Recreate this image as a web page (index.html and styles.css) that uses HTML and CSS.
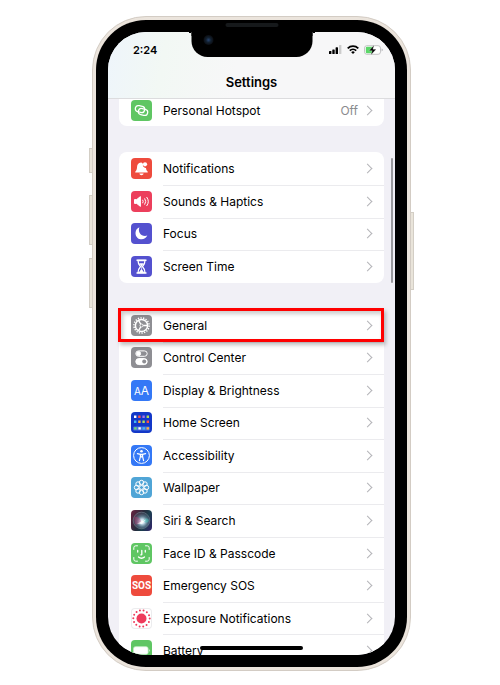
FILE: index.html
```html
<!DOCTYPE html>
<html lang="en">
<head>
    <meta charset="UTF-8">
    <meta name="viewport" content="width=device-width, initial-scale=1.0">
    <title>Settings</title>
    <link rel="stylesheet" href="styles.css">
</head>
<body>
    <div class="phone">
        <span class="side-button mute"></span>
        <span class="side-button volume-up"></span>
        <span class="side-button volume-down"></span>
        <span class="side-button power"></span>
        <div class="bezel">
            <div class="notch">
                <span class="speaker"></span>
                <span class="camera"></span>
            </div>
            <div class="screen">
                <header>
                    <div class="status-bar">
                        <span class="time">2:24</span>
                        <svg class="signal" viewBox="0 0 13 9" width="13" height="9">
                            <rect x="0" y="6" width="2.4" height="3" rx=".6"/>
                            <rect x="3.3" y="4.5" width="2.4" height="4.5" rx=".6"/>
                            <rect x="6.6" y="2.3" width="2.4" height="6.7" rx=".6"/>
                            <rect x="10" y="0" width="2.4" height="9" rx=".6" fill="#ccc"/>
                        </svg>
                        <svg class="wifi" viewBox="0 0 12 9" width="12" height="9" fill="none" stroke="#000" stroke-width="1.8">
                            <path d="M.7 3.3a7.6 7.6 0 0 1 10.6 0M2.8 5.6a4.6 4.6 0 0 1 6.4 0"/>
                            <path d="M6 9 4.2 7.2a2.6 2.6 0 0 1 3.6 0z" fill="#000" stroke="none"/>
                        </svg>
                        <svg class="battery" viewBox="0 0 19 10" width="19" height="10">
                            <rect x=".5" y=".7" width="16" height="8.6" rx="2.4" fill="#fff" stroke="#b5b5b8" stroke-width=".8"/>
                            <path d="M3 1.800h5.500v6.400H3A1.200 1.200 0 0 1 1.800 7V3A1.200 1.200 0 0 1 3 1.800z" fill="#5bd769"/>
                            <path d="M17.600 3.600q1.200.4 1.200 1.400t-1.200 1.400z" fill="#b5b5b8"/>
                            <path d="M10.200 0 5 5.700h3.200L6.800 10 12.200 4.200H8.900z" fill="#000" stroke="#fff" stroke-width=".3"/>
                        </svg>
                    </div>
                    <h1>Settings</h1>
                </header>

                <main>
                    <ul class="group partial">
                        <li><a href="#hotspot">
                            <svg class="icon green" viewBox="0 0 21 21" fill="none" stroke="#fff" stroke-width="1.3">
                                <rect x="4.3" y="6" width="9.4" height="6.2" rx="3.1" transform="rotate(14 9 9)"/>
                                <rect x="7.3" y="8.800" width="9.4" height="6.2" rx="3.1" transform="rotate(14 12 12)"/>
                            </svg>
                            <span class="label">Personal Hotspot</span><span class="value">Off</span></a></li>
                    </ul>

                    <ul class="group alerts">
                        <li><a href="#notifications">
                            <svg class="icon red" viewBox="0 0 21 21" fill="#fff">
                                <path d="M10 4.500c-2.700.3-3.900 2.200-4 4.700-.1 2.500-.6 3.100-1.600 4.200-.5.600-.2 1.200.5 1.200h11.200c.7 0 1-.6.5-1.200-1-1-1.500-1.900-1.600-3.400-2 .2-3.600-1.600-3-3.400.1-.6-.7-2.200-2-2.100zM8.400 15.500h4.200c-.3 2.200-3.900 2.200-4.200 0z"/>
                                <circle cx="14" cy="6.300" r="2.100"/>
                            </svg>
                            <span class="label">Notifications</span></a></li>
                        <li><a href="#sounds">
                            <svg class="icon pink" viewBox="0 0 21 21" fill="none" stroke="#fff" stroke-width="1">
                                <path d="M3.500 8.600h2.200l3.700-3v9.800l-3.700-3H3.500z" fill="#fff"/>
                                <path d="M11.600 8.800q1.100 1.700 0 3.400M13.600 7.400q2.200 3.100 0 6.200M15.600 6q3.400 4.500 0 9"/>
                            </svg>
                            <span class="label">Sounds &amp; Haptics</span></a></li>
                        <li><a href="#focus">
                            <svg class="icon purple" viewBox="0 0 21 21" fill="#fff">
                                <path d="M8.400 4.200C3.600 6 3.600 12.500 6.600 14.900c3.300 2.700 8.200 1.300 9.700-2.300C10.600 14.300 6.400 9.400 8.400 4.200z"/>
                            </svg>
                            <span class="label">Focus</span></a></li>
                        <li><a href="#screen-time">
                            <svg class="icon purple" viewBox="0 0 21 21" fill="none" stroke="#fff" stroke-width="1.5">
                                <path d="M5.500 4.300h10M5.500 16.900h10"/>
                                <path d="M7 4.500c0 3.500 1 4.500 2.500 6.100C8 12.200 7 13.200 7 16.700h7c0-3.500-1-4.500-2.500-6.100C13 9 14 8 14 4.500z" stroke-width="1.300"/>
                                <path d="M8.300 7.300h4.400l-1.900 2.900v3l2.200 3H8l2.200-3v-3z" fill="#fff" stroke="none"/>
                            </svg>
                            <span class="label">Screen Time</span></a></li>
                    </ul>

                    <ul class="group device">
                        <li class="highlight"><a href="#general">
                            <svg class="icon gray" viewBox="0 0 21 21" fill="none" stroke="#fff">
                                <circle cx="10.500" cy="10.500" r="7.600" stroke-width="1.500" stroke-dasharray="1.300 1.353"/>
                                <circle cx="10.500" cy="10.500" r="6.100" stroke-width="1.500"/>
                                <circle cx="10.500" cy="10.500" r="1.500" stroke-width=".9"/>
                                <path d="M12.200 10.500h4M9.700 9.100l-2-3.500M9.700 11.900l-2 3.500" stroke-width="1.300"/>
                            </svg>
                            <span class="label">General</span></a></li>
                        <li><a href="#control-center">
                            <svg class="icon gray" viewBox="0 0 21 21" fill="none" stroke="#fff">
                                <rect x="4.800" y="3.900" width="11.400" height="5.400" rx="2.700"/>
                                <circle cx="7.600" cy="6.600" r="2" fill="#fff"/>
                                <rect x="4.800" y="11.600" width="11.400" height="6" rx="3" fill="#fff"/>
                                <circle cx="13.200" cy="14.600" r="2" fill="#8e8e93" stroke="none"/>
                            </svg>
                            <span class="label">Control Center</span></a></li>
                        <li><a href="#display">
                            <span class="icon blue letters"><small>A</small>A</span>
                            <span class="label">Display &amp; Brightness</span></a></li>
                        <li><a href="#home-screen">
                            <svg class="icon navy" viewBox="0 0 21 21">
                                <rect x="2.200" y="14.400" width="16.600" height="4" rx="1" fill="#4a73dd"/>
                                <path fill="#fff" d="M3 3.600h2.400V6H3zM7.400 15.200h2.400v2.400H7.400z"/>
                                <path fill="#ff5148" d="M7.200 3.600h2.400V6H7.200zM15.600 8.600H18V11h-2.400z"/>
                                <path fill="#a873e8" d="M11.400 3.600h2.400V6h-2.400z"/>
                                <path fill="#b5dc55" d="M15.600 3.600H18V6h-2.400zM11.400 8.600h2.400V11h-2.400z"/>
                                <path fill="#44b9f2" d="M3 8.600h2.400V11H3zM11.600 15.200H14v2.400h-2.400z"/>
                                <path fill="#ffb13d" d="M7.200 8.600h2.400V11H7.200zM15.600 15.200H18v2.400h-2.400z"/>
                                <path fill="#70dc70" d="M3.200 15.200h2.400v2.400H3.200z"/>
                            </svg>
                            <span class="label">Home Screen</span></a></li>
                        <li><a href="#accessibility">
                            <svg class="icon blue" viewBox="0 0 21 21" fill="none" stroke="#fff">
                                <circle cx="10.500" cy="10.500" r="7.900" stroke-width="1"/>
                                <circle cx="10.500" cy="6.300" r="1.300" fill="#fff" stroke="none"/>
                                <path d="M6.400 8.600l3 .7v2.400L8.400 15.700M14.600 8.600l-3 .7v2.400l1 4M9.600 9.400h1.800v2.400H9.600z" stroke-width="1.200" stroke-linecap="round" stroke-linejoin="round"/>
                            </svg>
                            <span class="label">Accessibility</span></a></li>
                        <li><a href="#wallpaper">
                            <svg class="icon sky" viewBox="0 0 21 21" fill="none" stroke="#fff" stroke-width="1">
                                <circle cx="10.500" cy="10.500" r="2"/>
                                <circle cx="10.500" cy="5.500" r="2.200"/><circle cx="14" cy="7" r="2.200"/>
                                <circle cx="15.500" cy="10.500" r="2.200"/><circle cx="14" cy="14" r="2.200"/>
                                <circle cx="10.500" cy="15.500" r="2.200"/><circle cx="7" cy="14" r="2.200"/>
                                <circle cx="5.500" cy="10.500" r="2.200"/><circle cx="7" cy="7" r="2.200"/>
                            </svg>
                            <span class="label">Wallpaper</span></a></li>
                        <li><a href="#siri">
                            <svg class="icon siri" viewBox="0 0 21 21">
                                <defs>
                                    <radialGradient id="orb" cx=".54" cy=".56" r=".5">
                                        <stop offset="0" stop-color="#fff"/>
                                        <stop offset=".3" stop-color="#c4dcea"/>
                                        <stop offset=".65" stop-color="#6d8fa3" stop-opacity=".7"/>
                                        <stop offset="1" stop-color="#59667c" stop-opacity=".35"/>
                                    </radialGradient>
                                </defs>
                                <circle cx="10.500" cy="10.500" r="8.300" fill="url(#orb)" stroke="#7e93a0" stroke-width=".5"/>
                                <path d="M3 7q5-1 7 4-2 5-6 3z" fill="#b63a70" opacity=".4"/>
                                <path d="M12 11q3-5 6-1-1 5-6 1z" fill="#4fcabf" opacity=".5"/>
                                <path d="M6 13.500 15 9.500 11 14z" fill="#fff" opacity=".7"/>
                            </svg>
                            <span class="label">Siri &amp; Search</span></a></li>
                        <li><a href="#face-id">
                            <svg class="icon green" viewBox="0 0 21 21" fill="none" stroke="#fff" stroke-width="1" stroke-linecap="round">
                                <path d="M2.800 6.500V4.800q0-2 2-2h1.700M14.500 2.800h1.700q2 0 2 2v1.700M18.200 14.500v1.700q0 2-2 2h-1.700M6.500 18.200H4.800q-2 0-2-2v-1.700"/>
                                <path d="M6.700 7.500v1.600M14.300 7.500v1.600M10.800 7.500v3.700q0 .8-1 .7M7.500 14q3 2.600 6 0" stroke-width="1.300"/>
                            </svg>
                            <span class="label">Face ID &amp; Passcode</span></a></li>
                        <li><a href="#sos">
                            <span class="icon red sos">SOS</span>
                            <span class="label">Emergency SOS</span></a></li>
                        <li><a href="#exposure">
                            <svg class="icon white" viewBox="0 0 21 21">
                                <circle cx="10.500" cy="10.500" r="5" fill="#ee3b5b"/>
                                <circle cx="10.500" cy="10.500" r="8.200" fill="none" stroke="#ee3b5b" stroke-width="2" stroke-linecap="round" stroke-dasharray="0 3.680"/>
                            </svg>
                            <span class="label">Exposure Notifications</span></a></li>
                        <li><a href="#battery">
                            <svg class="icon green" viewBox="0 0 21 21">
                                <rect x="2.500" y="6.700" width="14.600" height="7.600" rx="2" fill="#fff" stroke="#c5efc7" stroke-width=".8"/>
                                <path d="M18 9q1.400 1.500 0 3z" fill="#fff"/>
                            </svg>
                            <span class="label">Battery</span></a></li>
                    </ul>
                </main>
                <span class="scrollbar"></span>
                <span class="home-indicator"></span>
            </div>
        </div>
    </div>
</body>
</html>
```
FILE: styles.css
```css
/* General Styling */
* {
    box-sizing: border-box;
}

body {
    font-family: Inter, 'Liberation Sans', sans-serif;
    font-size: 12px;
    margin: 0;
    padding: 16px 8px 14px 11px;
    background: #fff;
    color: #000;
}

/* Phone body */
.phone {
    position: relative;
    max-width: 319px;
    margin: 0 auto;
    padding: 3px;
    border: 1px solid #d3ccc4;
    border-radius: 54px;
    background: #ebe4dc;
}

.side-button {
    position: absolute;
    left: -4px;
    width: 3px;
    background: #e9e4da;
    border: 1px solid #d3cec5;
    border-right: 0;
}

.mute {
    top: 131px;
    height: 25px;
}

.volume-up {
    top: 178px;
    height: 50px;
}

.volume-down {
    top: 241px;
    height: 50px;
}

.power {
    left: auto;
    right: -4px;
    top: 195px;
    height: 78px;
    border: 1px solid #d3cec5;
    border-left: 0;
}

.bezel {
    position: relative;
    padding: 12px;
    border-radius: 50px;
    background: #000;
}

.notch {
    position: absolute;
    z-index: 2;
    top: 8px;
    left: 50%;
    width: 121px;
    height: 29px;
    transform: translateX(-50%);
    border-radius: 0 0 16px 16px;
    background: #000;
}

.notch::before,
.notch::after {
    content: "";
    position: absolute;
    top: 4px;
    width: 4px;
    height: 4px;
}

.notch::before {
    right: 100%;
    background: radial-gradient(circle at 0 100%, transparent 4px, #000 4px);
}

.notch::after {
    left: 100%;
    background: radial-gradient(circle at 100% 100%, transparent 4px, #000 4px);
}

.speaker {
    position: absolute;
    top: -5px;
    left: 34px;
    width: 53px;
    height: 4px;
    border-radius: 2px;
    background: #16191b;
}

.camera {
    position: absolute;
    top: 7px;
    left: 12px;
    width: 10px;
    height: 10px;
    border-radius: 50%;
    background: radial-gradient(circle, #284470 0, #12202f 35%, #0b0d12 70%);
}

.screen {
    position: relative;
    aspect-ratio: 287 / 623;
    overflow: hidden;
    border-radius: 38px;
    background: #f1f0f6;
}

/* Header */
header {
    height: 67px;
    border-bottom: 1px solid #dcdcde;
    background: linear-gradient(100deg, #eef5fb, #f2f8f4 20%, #f7f7f8 45%);
}

.status-bar {
    display: flex;
    align-items: center;
    gap: 5px;
    height: 35px;
    padding: 0 12px 0 25px;
}

.time {
    flex: 1;
    font-size: 11px;
    font-weight: 600;
}

h1 {
    margin: 0;
    padding-top: 7px;
    font-size: 13px;
    font-weight: 600;
    line-height: 16px;
    text-align: center;
}

/* Settings groups */
.group {
    display: grid;
    grid-auto-rows: 1fr;
    margin: 0 11px 26px;
    padding: 0;
    list-style: none;
    border-radius: 8px;
    background: #fff;
}

.partial {
    height: 27px;
    border-radius: 0 0 8px 8px;
    align-content: end;
    overflow: hidden;
    grid-auto-rows: 32px;
}

.alerts {
    height: 131px;
}

.device {
    height: 358px;
}

.group li {
    position: relative;
}

.group a {
    display: flex;
    align-items: center;
    height: 100%;
    padding: 0 13px 0 12px;
    color: inherit;
    text-decoration: none;
}

.group a::after {
    content: "";
    width: 6px;
    height: 6px;
    border: solid #b4b4b8;
    border-width: 1px 1px 0 0;
    transform: rotate(45deg);
}

.group li + li::before {
    content: "";
    position: absolute;
    top: 0;
    left: 44px;
    right: 0;
    height: 1px;
    background: #ebebee;
}

.label {
    flex: 1;
    margin-left: 11px;
}

.value {
    margin-right: 6px;
    color: #8a8a8e;
}

.highlight::after {
    content: "";
    position: absolute;
    z-index: 1;
    inset: -1px 0 0 -1px;
    border: 3px solid #f00;
    box-shadow: 2px 3px 4px rgba(0, 0, 0, 0.25), inset 2px 3px 4px rgba(0, 0, 0, 0.2);
}

/* Icons */
.icon {
    width: 21px;
    height: 21px;
    border-radius: 4px;
}

.green { background: #5fc663; }
.red { background: #ee4b3d; }
.pink { background: #ec3f5c; }
.purple { background: #5451cf; }
.gray { background: #8e8e93; }
.blue { background: #3478f6; }
.navy { background: #1338c8; }
.sky { background: #50a5d6; }
.white { background: #fff; box-shadow: inset 0 0 0 1px #ececee; }

.siri {
    background: linear-gradient(115deg, #6b2340, #262c3c 45%, #1b3f4e 65%, #33206b);
}

.letters,
.sos {
    display: flex;
    align-items: baseline;
    justify-content: center;
    color: #fff;
    font-size: 12px;
    line-height: 21px;
}

.letters small {
    font-size: 10px;
}

.sos {
    font-family: Roboto, sans-serif;
    font-size: 10px;
    font-weight: 700;
}

.scrollbar {
    position: absolute;
    top: 126px;
    right: 2px;
    width: 2px;
    height: 125px;
    border-radius: 1px;
    background: #98989d;
}

.home-indicator {
    position: absolute;
    bottom: 5px;
    left: 32%;
    right: 32%;
    height: 4px;
    border-radius: 2px;
    background: #000;
}
```
